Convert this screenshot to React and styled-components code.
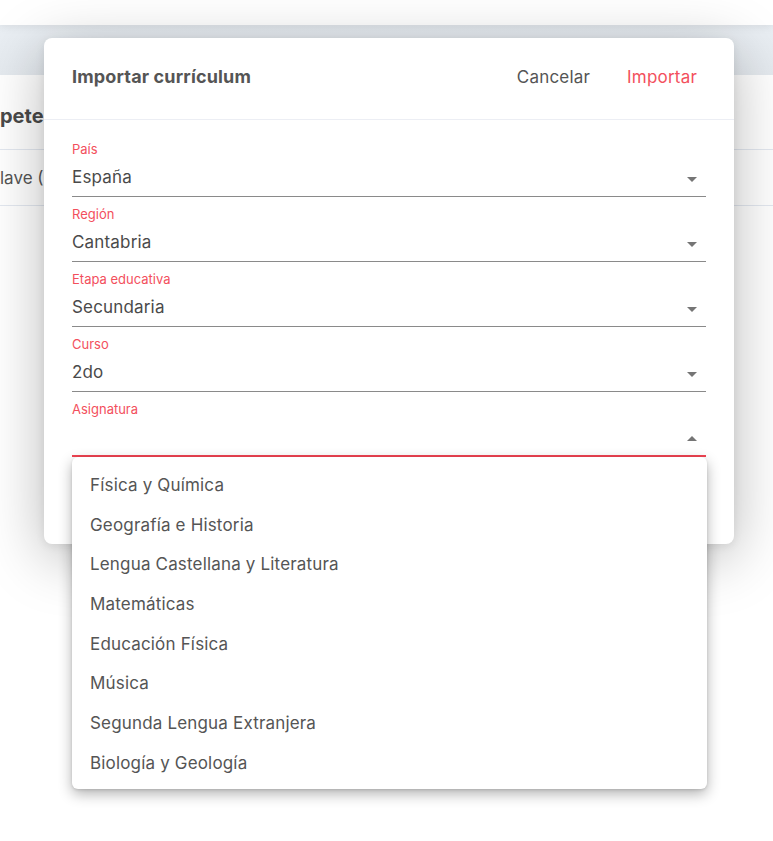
import React from 'react'
import styled, {createGlobalStyle} from 'styled-components'

const GlobalStyle = createGlobalStyle`
  * { box-sizing: border-box; }
  html, body { margin: 0; padding: 0; background: #fff; }
  body { font-family: Inter, 'Noto Sans', sans-serif; color: #555; }
`

const Page = styled.div`
  position: relative;
  width: 773px;
  height: 841px;
  overflow: hidden;
  background: #fff;
`

const Topbar = styled.div`
  height: 25px;
  background: #fff;
  box-shadow: 0 2px 8px rgba(0, 0, 0, 0.08);
  position: relative;
  z-index: 1;
`

const Band = styled.div`
  height: 50px;
  background: linear-gradient(180deg, #eaeff4 0%, #e5eaef 100%);
`

const Heading = styled.div`
  height: 75px;
  display: flex;
  align-items: flex-end;
  padding-bottom: 21px;
  font-size: 20px;
  font-weight: 700;
  color: #4a4a4a;
  border-bottom: 1px solid #e3e8f0;
  white-space: nowrap;
`

const Row = styled.div`
  height: 56px;
  display: flex;
  align-items: center;
  font-size: 17px;
  color: #555;
  border-bottom: 1px solid #e3e8f0;
  white-space: nowrap;
`

const Modal = styled.div`
  position: absolute;
  top: 38px;
  left: 44px;
  width: 690px;
  height: 506px;
  background: #fff;
  border-radius: 8px;
  box-shadow: 0 12px 60px rgba(0, 0, 0, 0.28), 0 2px 10px rgba(0, 0, 0, 0.08);
  z-index: 2;
`

const Header = styled.div`
  height: 82px;
  display: flex;
  align-items: center;
  padding: 0 37px 4px 28px;
  border-bottom: 1px solid #eceef4;
`

const Title = styled.h2`
  flex: 1;
  margin: 0;
  font-size: 18px;
  font-weight: 700;
  letter-spacing: 0.15px;
  color: #555;
`

const Action = styled.button`
  border: 0;
  background: none;
  padding: 0;
  margin-left: 37px;
  font-family: inherit;
  font-size: 17px;
  letter-spacing: 0.2px;
  color: ${p => (p.$primary ? '#f34f5d' : '#555')};
  cursor: pointer;
`

const Body = styled.div`
  padding: 21px 28px 0;
`

const Field = styled.div`
  position: relative;
  margin-bottom: 9px;
`

const Label = styled.div`
  font-size: 13px;
  line-height: 16px;
  color: #f34f5d;
`

const Select = styled.div`
  height: 40px;
  display: flex;
  align-items: center;
  justify-content: space-between;
  padding-right: 9px;
  font-size: 17px;
  letter-spacing: 0.17px;
  color: #4a4a4a;
  border-bottom: ${p => (p.$open ? '2px solid #f04452' : '1px solid #8a8a8a')};
`

const Caret = styled.span`
  width: 0;
  height: 0;
  margin-top: 5px;
  border-left: 5px solid transparent;
  border-right: 5px solid transparent;
  border-top: ${p => (p.$up ? '0' : '5px solid #757575')};
  border-bottom: ${p => (p.$up ? '5px solid #757575' : '0')};
`

const Menu = styled.ul`
  position: absolute;
  top: 100%;
  left: 0;
  right: -1px;
  margin: 0;
  padding: 8px 0 6px;
  list-style: none;
  background: #fff;
  border-radius: 6px;
  box-shadow: 0 5px 14px rgba(0, 0, 0, 0.3), 0 1px 3px rgba(0, 0, 0, 0.12);
  z-index: 3;
`

const Option = styled.li`
  height: 39.7px;
  display: flex;
  align-items: center;
  padding-left: 18px;
  font-size: 17px;
  letter-spacing: 0.17px;
  color: #555;
`

const fields = [
  {label: 'País', value: 'España'},
  {label: 'Región', value: 'Cantabria'},
  {label: 'Etapa educativa', value: 'Secundaria'},
  {label: 'Curso', value: '2do'}
]

const subjects = [
  'Física y Química',
  'Geografía e Historia',
  'Lengua Castellana y Literatura',
  'Matemáticas',
  'Educación Física',
  'Música',
  'Segunda Lengua Extranjera',
  'Biología y Geología'
]

const App = () => (
  <Page>
    <GlobalStyle />
    <Topbar />
    <Band />
    <Heading>petencias</Heading>
    <Row>lave (CC)</Row>

    <Modal>
      <Header>
        <Title>Importar currículum</Title>
        <Action>Cancelar</Action>
        <Action $primary>Importar</Action>
      </Header>
      <Body>
        {fields.map(f => (
          <Field key={f.label}>
            <Label>{f.label}</Label>
            <Select>
              {f.value}
              <Caret />
            </Select>
          </Field>
        ))}
        <Field>
          <Label>Asignatura</Label>
          <Select $open>
            <span />
            <Caret $up />
          </Select>
          <Menu>
            {subjects.map(s => (
              <Option key={s}>{s}</Option>
            ))}
          </Menu>
        </Field>
      </Body>
    </Modal>
  </Page>
)

export default App
